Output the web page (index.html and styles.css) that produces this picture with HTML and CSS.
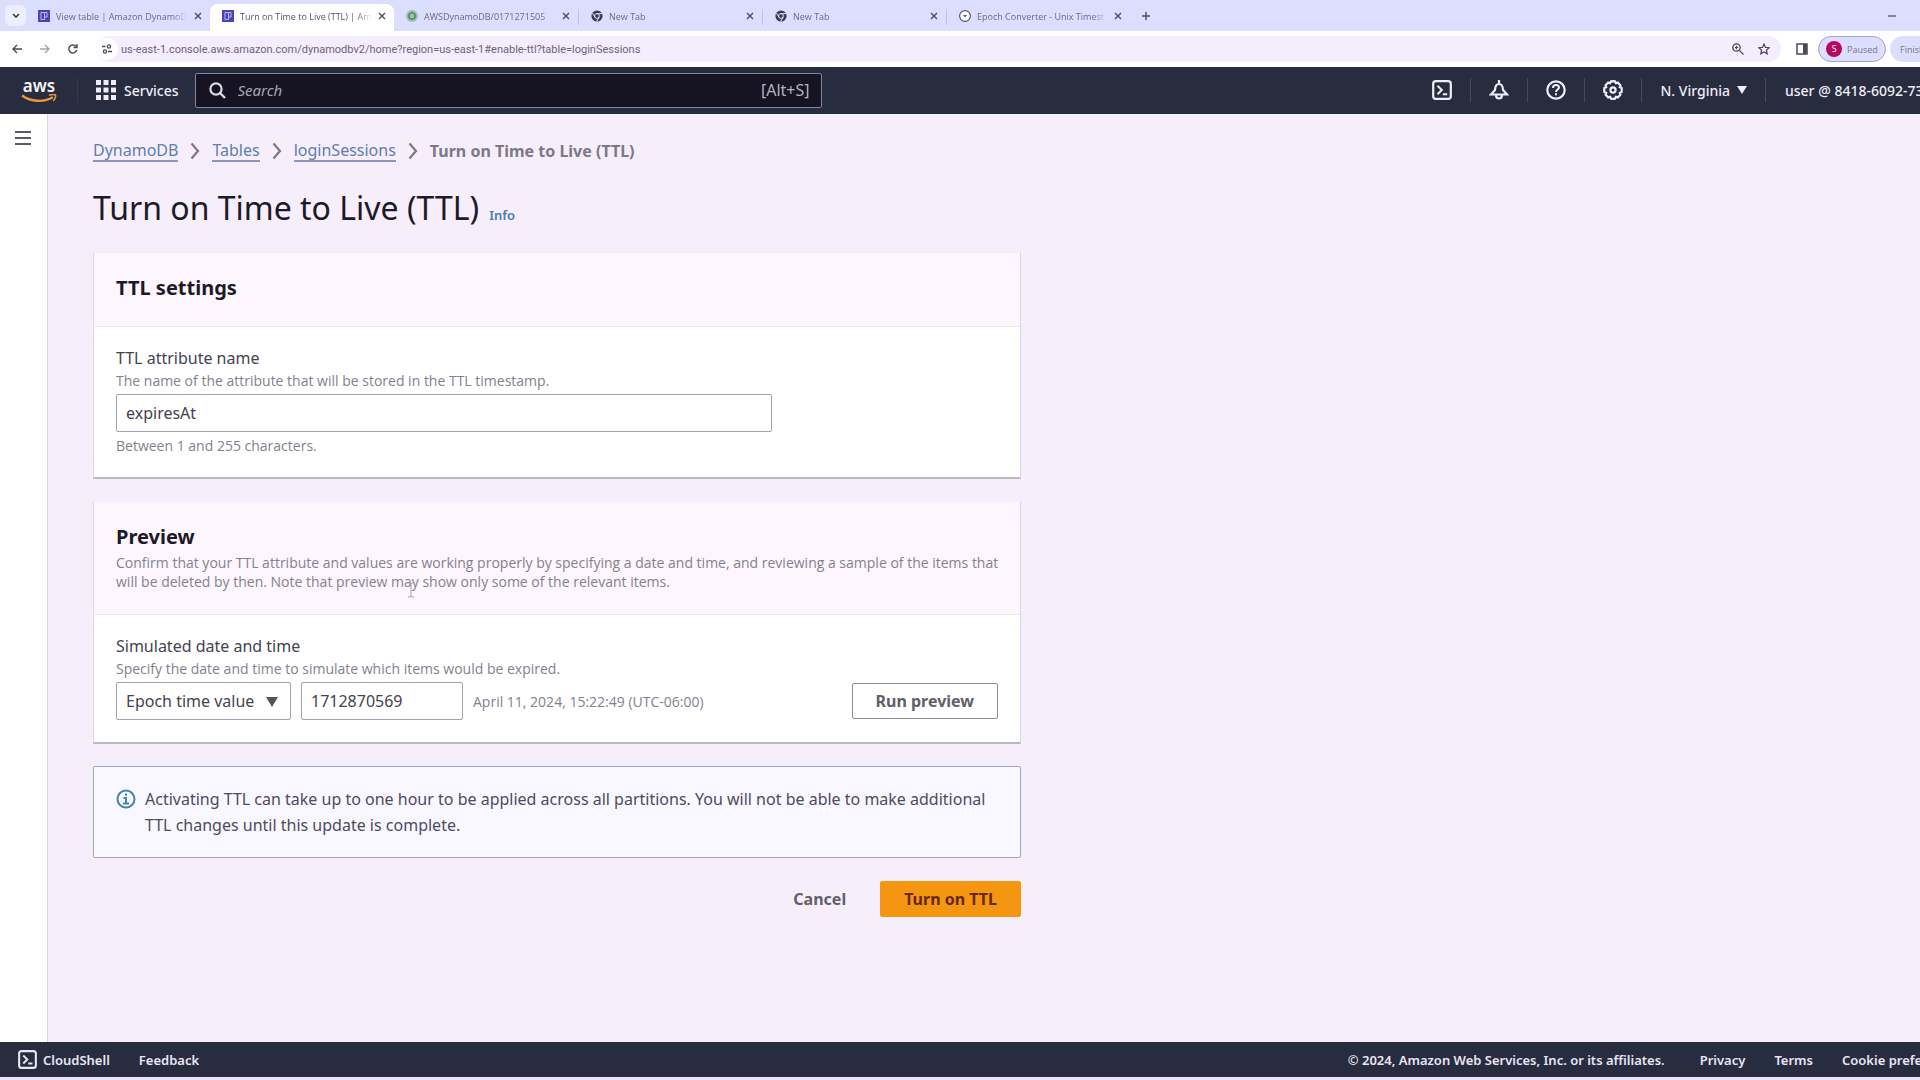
FILE: index.html
```html
<!DOCTYPE html>
<html lang="en">
    <head>
        <meta charset="utf-8">
        <title>Turn on Time to Live (TTL) | Amazon DynamoDB</title>
        <link rel="stylesheet" href="styles.css">
    </head>
    <body>
        <!-- Shared icons -->
        <svg class="sprite" aria-hidden="true">
            <symbol id="i-table" viewBox="0 0 12 12">
                <rect width="12" height="12" fill="#4a44b8"/>
                <path d="M3 2.5h3.500v7H3zM6.500 2.500h2.500v4.500H6.500" fill="none" stroke="#b9b8f5" stroke-width="1"/>
            </symbol>
            <symbol id="i-chrome" viewBox="0 0 12 12">
                <circle cx="6" cy="6" r="5.6" fill="#3d3d52"/>
                <circle cx="6" cy="6" r="2.4" fill="#3d3d52" stroke="#dedfff" stroke-width="1"/>
                <path d="M6 3.6h5M3.9 7.2 1.4 3M8.1 7.2 5.6 11.4" stroke="#dedfff" stroke-width="1"/>
            </symbol>
            <symbol id="i-close" viewBox="0 0 8 8">
                <path d="M1 1l6 6M7 1 1 7" stroke="currentColor" stroke-width="1.4"/>
            </symbol>
            <symbol id="i-shell" viewBox="0 0 20 20">
                <rect x="1.2" y="1.2" width="17.6" height="17.6" rx="2.6" fill="none" stroke="currentColor" stroke-width="2.2"/>
                <path d="M5.5 5.8 9.8 10l-4.3 4.2M10.8 14.2h4.4" fill="none" stroke="currentColor" stroke-width="2"/>
            </symbol>
            <symbol id="i-chevron" viewBox="0 0 10 18">
                <path d="M1.5 1.5 8 9l-6.5 7.5" fill="none" stroke="currentColor" stroke-width="2.2"/>
            </symbol>
        </svg>

        <div class="tabs">
            <button class="tab-list" aria-label="Search tabs"><svg width="8" height="6" viewBox="0 0 8 6"><path d="M1 1l3 3 3-3" fill="none" stroke="currentColor" stroke-width="1.6"/></svg></button>
            <div class="tab">
                <svg class="favicon" width="12" height="12"><use href="#i-table"/></svg>
                <span class="tab-title">View table | Amazon DynamoD</span>
                <button class="tab-close" aria-label="Close"><svg width="8" height="8"><use href="#i-close"/></svg></button>
            </div>
            <div class="tab active">
                <svg class="favicon" width="12" height="12"><use href="#i-table"/></svg>
                <span class="tab-title">Turn on Time to Live (TTL) | Am</span>
                <button class="tab-close" aria-label="Close"><svg width="8" height="8"><use href="#i-close"/></svg></button>
            </div>
            <div class="tab">
                <svg class="favicon" width="12" height="14" viewBox="0 0 12 14"><circle cx="6" cy="7" r="6" fill="#9cc3ae"/><path d="M6 3.5 9 5.2v3.6L6 10.5 3 8.8V5.2z" fill="none" stroke="#4c8464" stroke-width="1.4"/></svg>
                <span class="tab-title">AWSDynamoDB/0171271505</span>
                <button class="tab-close" aria-label="Close"><svg width="8" height="8"><use href="#i-close"/></svg></button>
            </div>
            <div class="tab lined">
                <svg class="favicon" width="12" height="12"><use href="#i-chrome"/></svg>
                <span class="tab-title">New Tab</span>
                <button class="tab-close" aria-label="Close"><svg width="8" height="8"><use href="#i-close"/></svg></button>
            </div>
            <div class="tab lined">
                <svg class="favicon" width="12" height="12"><use href="#i-chrome"/></svg>
                <span class="tab-title">New Tab</span>
                <button class="tab-close" aria-label="Close"><svg width="8" height="8"><use href="#i-close"/></svg></button>
            </div>
            <div class="tab lined">
                <svg class="favicon" width="12" height="12" viewBox="0 0 12 12"><circle cx="6" cy="6" r="5.4" fill="#fff" stroke="#55556a" stroke-width="1.2"/><path d="M4 5h4L6 7.5z" fill="#55556a"/></svg>
                <span class="tab-title">Epoch Converter - Unix Timest</span>
                <button class="tab-close" aria-label="Close"><svg width="8" height="8"><use href="#i-close"/></svg></button>
            </div>
            <button class="new-tab" aria-label="New tab"><svg width="8" height="8" viewBox="0 0 8 8"><path d="M4 0v8M0 4h8" stroke="currentColor" stroke-width="1.4"/></svg></button>
            <button class="minimize" aria-label="Minimize"></button>
        </div>

        <div class="toolbar">
            <button aria-label="Back"><svg width="10" height="10" viewBox="0 0 10 10"><path d="M10 5H1M5 1 1 5l4 4" fill="none" stroke="currentColor" stroke-width="1.4"/></svg></button>
            <button class="faded" aria-label="Forward"><svg width="10" height="10" viewBox="0 0 10 10"><path d="M0 5h9M5 1l4 4-4 4" fill="none" stroke="currentColor" stroke-width="1.4"/></svg></button>
            <button aria-label="Reload"><svg width="10" height="10" viewBox="0 0 10 10"><path d="M8.8 6A4 4 0 1 1 8 2.4M9 0v3.5H5.5" fill="none" stroke="currentColor" stroke-width="1.4"/></svg></button>
            <div class="address">
                <span class="site-info"><svg width="10" height="10" viewBox="0 0 10 10"><path d="M0 2.5h3.5M6 7.5h4" stroke="currentColor" stroke-width="1.4"/><circle cx="7" cy="2.5" r="1.6" fill="none" stroke="currentColor" stroke-width="1.3"/><circle cx="3" cy="7.5" r="1.6" fill="none" stroke="currentColor" stroke-width="1.3"/></svg></span>
                <input type="text" aria-label="Address" value="us-east-1.console.aws.amazon.com/dynamodbv2/home?region=us-east-1#enable-ttl?table=loginSessions">
                <button aria-label="Zoom"><svg width="12" height="12" viewBox="0 0 12 12"><circle cx="4.5" cy="4.5" r="3.7" fill="none" stroke="currentColor" stroke-width="1.3"/><path d="M7.3 7.3 11.5 11.5M2.8 4.5h3.4M4.5 2.8v3.4" stroke="currentColor" stroke-width="1.2"/></svg></button>
                <button aria-label="Bookmark"><svg width="12" height="12" viewBox="0 0 12 12"><path d="M6 1l1.5 3.4 3.7.3-2.8 2.5.8 3.6L6 8.9 2.8 10.8l.8-3.6L.8 4.7l3.7-.3z" fill="none" stroke="currentColor" stroke-width="1.2"/></svg></button>
            </div>
            <button aria-label="Side panel"><svg width="12" height="12" viewBox="0 0 12 12"><rect x="1" y="1" width="10" height="10" fill="none" stroke="currentColor" stroke-width="1.5"/><path d="M7 1h4v10H7z" fill="currentColor"/></svg></button>
            <button class="profile"><span class="avatar">S</span>Paused</button>
            <button class="update">Finish update</button>
        </div>

        <header class="aws-header">
            <a class="logo" href="#" aria-label="AWS home">
                <span>aws</span>
                <svg width="36" height="9" viewBox="0 0 36 9"><path d="M1 1.5c9 6.5 22 7 31 1.8" fill="none" stroke="#f0943a" stroke-width="2.4"/><path d="M28 1.2c3-1 6-.7 6.5 0s-.2 3.6-2.2 5.8" fill="none" stroke="#f0943a" stroke-width="1.5"/></svg>
            </a>
            <button class="services">
                <svg width="20" height="20" viewBox="0 0 20 20"><path d="M0 0h5v5H0zM7.5 0h5v5h-5zM15 0h5v5h-5zM0 7.5h5v5H0zM7.5 7.5h5v5h-5zM15 7.5h5v5h-5zM0 15h5v5H0zM7.5 15h5v5h-5zM15 15h5v5h-5z" fill="currentColor"/></svg>
                Services
            </button>
            <label class="search">
                <svg width="17" height="17" viewBox="0 0 17 17"><circle cx="7" cy="7" r="5.6" fill="none" stroke="currentColor" stroke-width="2.2"/><path d="M11 11l5 5" stroke="currentColor" stroke-width="2.4"/></svg>
                <input type="text" placeholder="Search" aria-label="Search">
                <span>[Alt+S]</span>
            </label>
            <nav class="header-tools">
                <button aria-label="CloudShell"><svg width="20" height="20"><use href="#i-shell"/></svg></button>
                <button aria-label="Notifications"><svg width="20" height="20" viewBox="0 0 20 20"><path d="M10 0v4M2 14.5l4-4.500c.2-4 1.500-6 4-6s3.800 2 4 6l4 4.500zM7 15c0 2.300 1.200 3.500 3 3.500s3-1.200 3-3.500" fill="none" stroke="currentColor" stroke-width="2.2"/></svg></button>
                <button aria-label="Support"><svg width="20" height="20" viewBox="0 0 20 20"><circle cx="10" cy="10" r="8.7" fill="none" stroke="currentColor" stroke-width="2.2"/><path d="M7 8c0-2 1.3-3 3-3s3 1 3 2.6C13 9.5 10 9.6 10 12M10 13.3v2" fill="none" stroke="currentColor" stroke-width="2"/></svg></button>
                <button aria-label="Settings"><svg width="20" height="20" viewBox="0 0 20 20"><path d="M10 1.2l2 .2.9 1.8 1.9-.6 2.6 2.6-.6 1.9 1.8.9.2 2-.2 2-1.8.9.6 1.9-2.6 2.6-1.9-.6-.9 1.8-2 .2-2-.2-.9-1.8-1.9.6-2.6-2.6.6-1.9-1.8-.9-.2-2 .2-2 1.8-.9-.6-1.9 2.6-2.6 1.9.6.9-1.8z" fill="none" stroke="currentColor" stroke-width="2.2"/><circle cx="10" cy="10" r="2.6" fill="none" stroke="currentColor" stroke-width="2.2"/></svg></button>
                <button class="region">N. Virginia <i class="caret"></i></button>
                <button class="account">user @ 8418-6092-7368</button>
            </nav>
        </header>

        <div class="app">
            <aside class="sidebar">
                <button aria-label="Open navigation"><svg width="16" height="14" viewBox="0 0 16 14"><path d="M0 1h16M0 7h16M0 13h16" stroke="currentColor" stroke-width="2"/></svg></button>
            </aside>

            <main>
                <nav class="breadcrumbs">
                    <a href="#">DynamoDB</a>
                    <svg width="10" height="18"><use href="#i-chevron"/></svg>
                    <a href="#">Tables</a>
                    <svg width="10" height="18"><use href="#i-chevron"/></svg>
                    <a href="#">loginSessions</a>
                    <svg width="10" height="18"><use href="#i-chevron"/></svg>
                    <span>Turn on Time to Live (TTL)</span>
                </nav>

                <div class="page-title">
                    <h1>Turn on Time to Live (TTL)</h1>
                    <a href="#">Info</a>
                </div>

                <section class="card">
                    <div class="card-header">
                        <h2>TTL settings</h2>
                    </div>
                    <div class="card-body">
                        <label for="attribute">TTL attribute name</label>
                        <p class="hint">The name of the attribute that will be stored in the TTL timestamp.</p>
                        <input id="attribute" class="field attribute" type="text" value="expiresAt">
                        <p class="hint">Between 1 and 255 characters.</p>
                    </div>
                </section>

                <section class="card">
                    <div class="card-header">
                        <h2>Preview</h2>
                        <p class="hint">Confirm that your TTL attribute and values are working properly by specifying a date and time, and reviewing a sample of the items that will be deleted by then. Note that preview may show only some of the relevant items.</p>
                        <svg class="cursor" width="8" height="16" viewBox="0 0 8 16" aria-hidden="true"><path d="M1 1h2l1 1 1-1h2M4 2v12M1 15h2l1-1 1 1h2" fill="none" stroke="#a9a3b0"/></svg>
                    </div>
                    <div class="card-body">
                        <label for="format">Simulated date and time</label>
                        <p class="hint">Specify the date and time to simulate which items would be expired.</p>
                        <div class="preview-row">
                            <div class="select">
                                <select id="format" class="field">
                                    <option>Epoch time value</option>
                                </select>
                            </div>
                            <input class="field epoch" type="text" aria-label="Epoch time" value="1712870569">
                            <span class="hint">April 11, 2024, 15:22:49 (UTC-06:00)</span>
                            <button class="btn">Run preview</button>
                        </div>
                    </div>
                </section>

                <div class="alert">
                    <svg width="20" height="20" viewBox="0 0 20 20"><circle cx="10" cy="10" r="8.5" fill="none" stroke="currentColor" stroke-width="2"/><path d="M10 4.5v2.2M7.5 9H10v5.5M7 14.5h6" fill="none" stroke="currentColor" stroke-width="2"/></svg>
                    <p>Activating TTL can take up to one hour to be applied across all partitions. You will not be able to make additional TTL changes until this update is complete.</p>
                </div>

                <div class="actions">
                    <button class="btn link">Cancel</button>
                    <button class="btn primary">Turn on TTL</button>
                </div>
            </main>
        </div>

        <footer>
            <button><svg width="19" height="19"><use href="#i-shell"/></svg>CloudShell</button>
            <a href="#">Feedback</a>
            <span class="copyright">© 2024, Amazon Web Services, Inc. or its affiliates.</span>
            <a href="#">Privacy</a>
            <a href="#">Terms</a>
            <a class="cookies" href="#">Cookie preferences</a>
        </footer>
    </body>
</html>
```
FILE: styles.css
```css
* {
    box-sizing: border-box;
}

body {
    margin: 0;
    min-height: 100vh;
    display: flex;
    flex-direction: column;
    overflow-x: hidden;
    font-family: "Noto Sans", "Open Sans", sans-serif;
    font-size: 16px;
    color: #46424f;
    background-color: #f6eefb;
}

button, input, select {
    font: inherit;
    color: inherit;
}

button {
    display: flex;
    align-items: center;
    justify-content: center;
    padding: 0;
    border: none;
    background: none;
    white-space: nowrap;
    cursor: pointer;
}

h1, h2, p {
    margin: 0;
}

svg {
    flex: none;
}

.sprite {
    position: absolute;
    width: 0;
    height: 0;
}

/* Browser tabs */
.tabs {
    display: flex;
    align-items: center;
    height: 31px;
    padding-left: 5px;
    font-family: "Open Sans", sans-serif;
    font-size: 9px;
    color: #6b6a80;
    background-color: #dcdeff;
}

.tab-list {
    width: 21px;
    height: 21px;
    border-radius: 6px;
    color: #3d3d50;
    background-color: #eeeeff;
}

.tab {
    display: flex;
    align-items: center;
    width: 184px;
    height: 27px;
    padding: 0 8px 3px 12px;
    align-self: flex-end;
}

.tab.active {
    border-radius: 8px 8px 0 0;
    color: #55546a;
    background-color: #fff;
}

.tab.lined {
    border-left: 1px solid;
    border-image: linear-gradient(transparent 20%, #bfc0e4 20%, #bfc0e4 75%, transparent 75%) 1;
}

.favicon {
    margin-right: 6px;
}

.tab-title {
    flex: 1;
    overflow: hidden;
    white-space: nowrap;
    margin-right: 6px;
    -webkit-mask-image: linear-gradient(to right, #000 88%, transparent);
    mask-image: linear-gradient(to right, #000 88%, transparent);
}

.tab-close, .new-tab {
    color: #4c4b60;
}

.new-tab {
    margin-left: 12px;
}

.minimize {
    width: 8px;
    height: 2px;
    margin: 0 24px 0 auto;
    background-color: #8786a0;
}

/* Browser toolbar */
.toolbar {
    display: flex;
    align-items: center;
    height: 36px;
    padding-left: 12px;
    gap: 18px;
    overflow: hidden;
    font-family: "Open Sans", sans-serif;
    font-size: 9px;
    color: #4a4958;
    background-color: #fff;
}

.faded {
    opacity: 0.5;
}

.address {
    flex: 1;
    display: flex;
    align-items: center;
    gap: 14px;
    height: 26px;
    margin-right: -3px;
    padding: 0 11px 0 0;
    border-radius: 13px;
    background-color: #f4edfe;
}

.site-info {
    display: flex;
    align-items: center;
    justify-content: center;
    width: 22px;
    height: 22px;
    margin-right: -11px;
    border-radius: 50%;
    background-color: #fff;
}

.address input {
    flex: 1;
    padding: 0;
    border: none;
    font-family: Roboto, sans-serif;
    font-size: 11px;
    color: #6b6478;
    background: none;
    outline: none;
}

.profile {
    gap: 5px;
    width: 68px;
    height: 26px;
    margin-left: -8px;
    border: 1px solid #a5a4c4;
    border-radius: 13px;
    color: #77768c;
    background-color: #dcdeff;
}

.avatar {
    width: 16px;
    height: 16px;
    border-radius: 50%;
    line-height: 16px;
    color: #fff;
    background-color: #b8075f;
}

.update {
    flex: none;
    justify-content: flex-start;
    width: 30px;
    height: 26px;
    margin-left: -14px;
    padding-left: 10px;
    border-radius: 13px 0 0 13px;
    overflow: hidden;
    color: #77768c;
    background-color: #dcdeff;
}

/* AWS header */
.aws-header {
    display: flex;
    align-items: center;
    height: 47px;
    padding: 0 0 1px 21px;
    font-size: 14px;
    font-weight: 500;
    color: #efeef8;
    background-color: #282c3f;
}

.logo {
    display: flex;
    flex-direction: column;
    align-items: center;
    width: 57px;
    padding-right: 20px;
    border-right: 1px solid #363a4e;
    font-size: 17px;
    font-weight: 600;
    line-height: 16px;
    color: #f4f3fa;
    text-decoration: none;
}

.services {
    gap: 8px;
    margin: 0 16px 0 18px;
}

.search {
    display: flex;
    align-items: center;
    gap: 12px;
    width: 627px;
    height: 35px;
    padding: 0 11px 0 13px;
    border: 1px solid #85849a;
    border-radius: 2px;
    font-size: 16px;
    font-weight: 400;
    color: #dcdae6;
    background-color: #161422;
}

.search input {
    flex: 1;
    min-width: 0;
    padding: 0;
    border: none;
    font-size: 15px;
    background: none;
    outline: none;
}

.search input::placeholder {
    color: #a9a6b5;
    font-style: italic;
}

.search span {
    color: #b5b2c0;
}

.header-tools {
    display: flex;
    align-items: center;
    margin-left: auto;
}

.header-tools button {
    height: 24px;
    padding: 0 18px;
    border-left: 1px solid #454960;
}

.header-tools button:first-child {
    border-left: none;
}

.header-tools button.region {
    gap: 7px;
}

.header-tools button.account {
    justify-content: flex-start;
    width: 155px;
    padding: 0 0 0 19px;
    overflow: hidden;
}

.caret {
    width: 10px;
    height: 8px;
    background-color: currentColor;
    clip-path: polygon(0 0, 100% 0, 50% 100%);
}

/* Page */
.app {
    flex: 1;
    display: flex;
}

.sidebar {
    width: 48px;
    padding: 17px 15px;
    border-right: 1px solid #dad6e0;
    color: #5c5a66;
    background-color: #fff;
}

main {
    flex: 1;
    max-width: 973px;
    padding: 24px 0 40px 45px;
}

.breadcrumbs {
    display: flex;
    align-items: center;
    gap: 12px;
    line-height: 26px;
    color: #7d7888;
}

.breadcrumbs a {
    line-height: 20px;
    border-bottom: 2px solid #8a97bc;
    color: #5c7fae;
    text-decoration: none;
}

.breadcrumbs span {
    font-weight: 700;
}

.page-title {
    display: flex;
    align-items: baseline;
    gap: 10px;
    margin: 21px 0;
}

h1 {
    font-size: 32px;
    font-weight: 400;
    line-height: 46px;
    color: #1d1928;
}

.page-title a {
    font-size: 13px;
    font-weight: 600;
    color: #4d7ca9;
    text-decoration: none;
}

.card {
    margin-bottom: 22px;
    border: 1px solid #dcd6e2;
    border-top-color: #f3ecf8;
    border-bottom: 2px solid #bdb8c6;
    background-color: #fff;
}

.card-header {
    position: relative;
    padding: 20px 12px 23px 22px;
    border-bottom: 1px solid #eee6f2;
    background-color: #fdf6fe;
}

h2 {
    font-size: 20px;
    font-weight: 700;
    line-height: 30px;
    color: #1d1928;
}

.hint {
    font-family: "Open Sans", sans-serif;
    font-size: 14px;
    line-height: 19px;
    color: #85808f;
}

.card-header .hint {
    margin-top: 1px;
}

.cursor {
    position: absolute;
    left: 313px;
    top: 80px;
}

.card-body {
    padding: 18px 22px 22px;
}

.card-body label {
    display: block;
    line-height: 26px;
}

.field {
    display: block;
    height: 38px;
    padding: 0 9px;
    border: 1px solid #a5a1ad;
    border-radius: 2px;
    background-color: #fff;
}

.attribute {
    width: 656px;
    margin: 4px 0;
}

.preview-row {
    display: flex;
    align-items: center;
    gap: 10px;
    margin-top: 4px;
}

.select {
    position: relative;
}

.select select {
    width: 175px;
    appearance: none;
}

.select::after {
    content: "";
    position: absolute;
    right: 13px;
    top: 15px;
    width: 12px;
    height: 10px;
    background-color: #55525c;
    clip-path: polygon(0 0, 100% 0, 50% 100%);
    pointer-events: none;
}

.epoch {
    width: 162px;
}

.btn {
    height: 36px;
    padding: 0 23px;
    border: 1px solid #8f8b98;
    border-radius: 2px;
    font-weight: 700;
    color: #625e6a;
}

.preview-row .btn {
    margin-left: auto;
}

.alert {
    display: flex;
    gap: 9px;
    padding: 19px 22px;
    border: 1px solid #a3a5c4;
    border-radius: 2px;
    line-height: 26px;
    color: #4e4b60;
    background-color: #f9f7ff;
}

.alert svg {
    margin-top: 3px;
    color: #3f87a6;
}

.actions {
    display: flex;
    justify-content: flex-end;
    gap: 10px;
    margin-top: 23px;
}

.btn.link {
    border-color: transparent;
}

.btn.primary {
    border-color: #f59612;
    color: #66280f;
    background-color: #f59612;
}

/* Footer */
footer {
    display: flex;
    align-items: center;
    height: 38px;
    padding-left: 18px;
    border-bottom: 3px solid #e9e4fc;
    font-size: 13px;
    font-weight: 600;
    color: #e9e6f4;
    background-color: #282c3f;
}

footer button {
    gap: 6px;
}

footer a {
    margin-left: 29px;
    color: inherit;
    text-decoration: none;
}

.copyright {
    margin-left: auto;
    margin-right: 6px;
}

.cookies {
    width: 78px;
    overflow: hidden;
    white-space: nowrap;
}
```
